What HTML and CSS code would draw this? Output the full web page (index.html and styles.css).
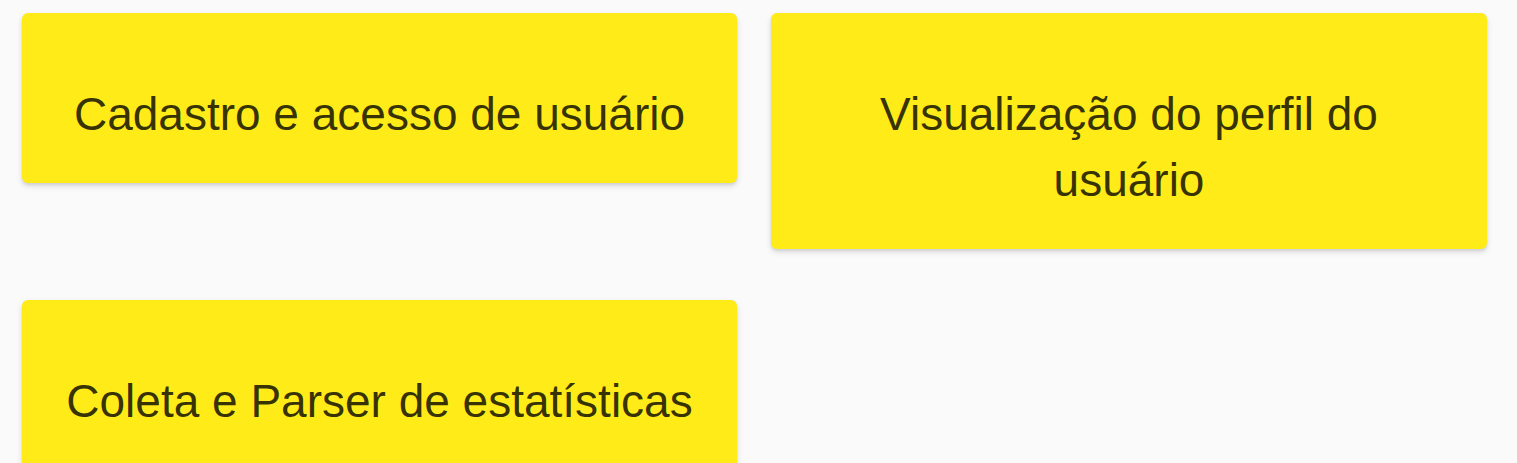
FILE: index.html
```html
<!DOCTYPE html>
<html lang="pt-BR">
<head>
<meta charset="utf-8">
<title>Funcionalidades</title>
<link rel="stylesheet" href="styles.css">
</head>
<body>
<main class="grid">
  <div class="card">Cadastro e acesso de usuário</div>
  <div class="card">Visualização do perfil do usuário</div>
  <div class="card">Coleta e Parser de estatísticas</div>
</main>
</body>
</html>
```

FILE: styles.css
```css
html, body {
  margin: 0;
  padding: 0;
  background: #fafafa;
  height: 100%;
  overflow: hidden;
}
body {
  font-family: "Liberation Sans", Arial, sans-serif;
}
.grid {
  display: grid;
  grid-template-columns: 715px 716px;
  column-gap: 34px;
  row-gap: 51px;
  align-items: start;
  padding: 13px 0 0 22px;
}
.card {
  background: #feeb17;
  border-radius: 6px;
  box-shadow: 0 3px 6px rgba(0,0,0,0.12), 0 2px 3px rgba(0,0,0,0.08);
  padding: 68px 40px 36px;
  text-align: center;
  font-size: 46px;
  line-height: 66px;
  color: rgba(0,0,0,0.8);
}
```
